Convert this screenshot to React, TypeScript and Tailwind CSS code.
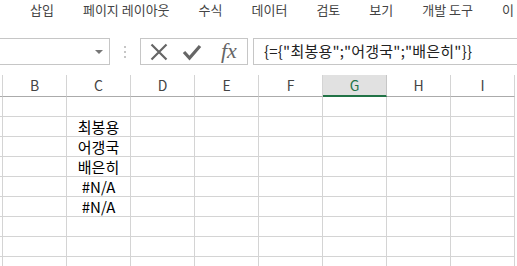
import React from "react";

const tabs = ["삽입", "페이지 레이아웃", "수식", "데이터", "검토", "보기", "개발 도구", "이"];
const cols = ["B", "C", "D", "E", "F", "G", "H", "I"];
const cValues = ["", "최봉용", "어갱국", "배은히", "#N/A", "#N/A", "", "", ""];

const FONT = "font-['Noto_Sans_CJK_KR','Noto_Sans',sans-serif]";

const App: React.FC = () => {
  return (
    <div className={`w-[517px] h-[266px] overflow-hidden bg-white ${FONT}`}>
      {/* ribbon tabs */}
      <div className="h-[18px] flex items-center gap-[29px] pl-[30px] text-[13px] leading-none text-[#444] whitespace-nowrap">
        {tabs.map((t) => (
          <span key={t}>{t}</span>
        ))}
      </div>

      {/* formula bar */}
      <div className="mt-[20px] h-[27px] flex">
        <div className="w-[110px] h-full border border-l-0 border-[#c6c6c6] flex items-center justify-end pr-[6px]">
          <div className="w-0 h-0 border-l-[4px] border-r-[4px] border-t-[4px] border-l-transparent border-r-transparent border-t-[#777]" />
        </div>
        <div className="w-[30px] flex flex-col items-center justify-center gap-[3px]">
          <span className="w-[2px] h-[2px] bg-[#c6c6c6]" />
          <span className="w-[2px] h-[2px] bg-[#c6c6c6]" />
          <span className="w-[2px] h-[2px] bg-[#c6c6c6]" />
        </div>
        <div className="w-[108px] h-full border border-[#c6c6c6] flex items-center pl-[9px]">
          <svg width="18" height="18" viewBox="0 0 18 18">
            <path d="M1.5 1.5 L16.5 16.5 M16.5 1.5 L1.5 16.5" stroke="#666" strokeWidth="2.2" fill="none" />
          </svg>
          <svg width="20" height="18" viewBox="0 0 20 18" className="ml-[14px]">
            <path d="M2 9 L7.5 15 L18 3" stroke="#666" strokeWidth="3.2" fill="none" strokeLinejoin="miter" />
          </svg>
          <span className="ml-[19px] font-['Liberation_Serif',serif] italic text-[22px] leading-none text-[#666] -mt-[2px]">
            fx
          </span>
        </div>
        <div className="flex-1 ml-[5px] h-full border border-r-0 border-[#c6c6c6] flex items-center pl-[10px] text-[15px] tracking-[0.2px] text-[#222] whitespace-nowrap">
          {'{={"최봉용";"어갱국";"배은히"}}'}
        </div>
      </div>

      {/* column headers */}
      <div className="mt-[10px] flex h-[22px]">
        <div className="w-[3px] h-full border-r border-b border-r-[#d4d4d4] border-b-[#ababab]" />
        {cols.map((c) =>
          c === "G" ? (
            <div
              key={c}
              className="w-[64px] shrink-0 h-full bg-[#e1e1e1] border-r border-[#c6c6c6] border-b-2 border-b-[#217346] flex items-center justify-center text-[14px] text-[#217346]"
            >
              {c}
            </div>
          ) : (
            <div
              key={c}
              className="w-[64px] shrink-0 h-full border-r border-r-[#d4d4d4] border-b border-b-[#ababab] flex items-center justify-center text-[14px] text-[#444]"
            >
              {c}
            </div>
          )
        )}
      </div>

      {/* rows */}
      {cValues.map((v, r) => (
        <div key={r} className="flex h-[20px]">
          <div className="w-[3px] h-full border-r border-b border-[#d4d4d4]" />
          {cols.map((c) => (
            <div
              key={c}
              className="w-[64px] shrink-0 h-full border-r border-b border-[#d4d4d4] flex items-center justify-center text-[15px] leading-none text-black"
            >
              {c === "C" ? v : ""}
            </div>
          ))}
        </div>
      ))}
    </div>
  );
};

export default App;
